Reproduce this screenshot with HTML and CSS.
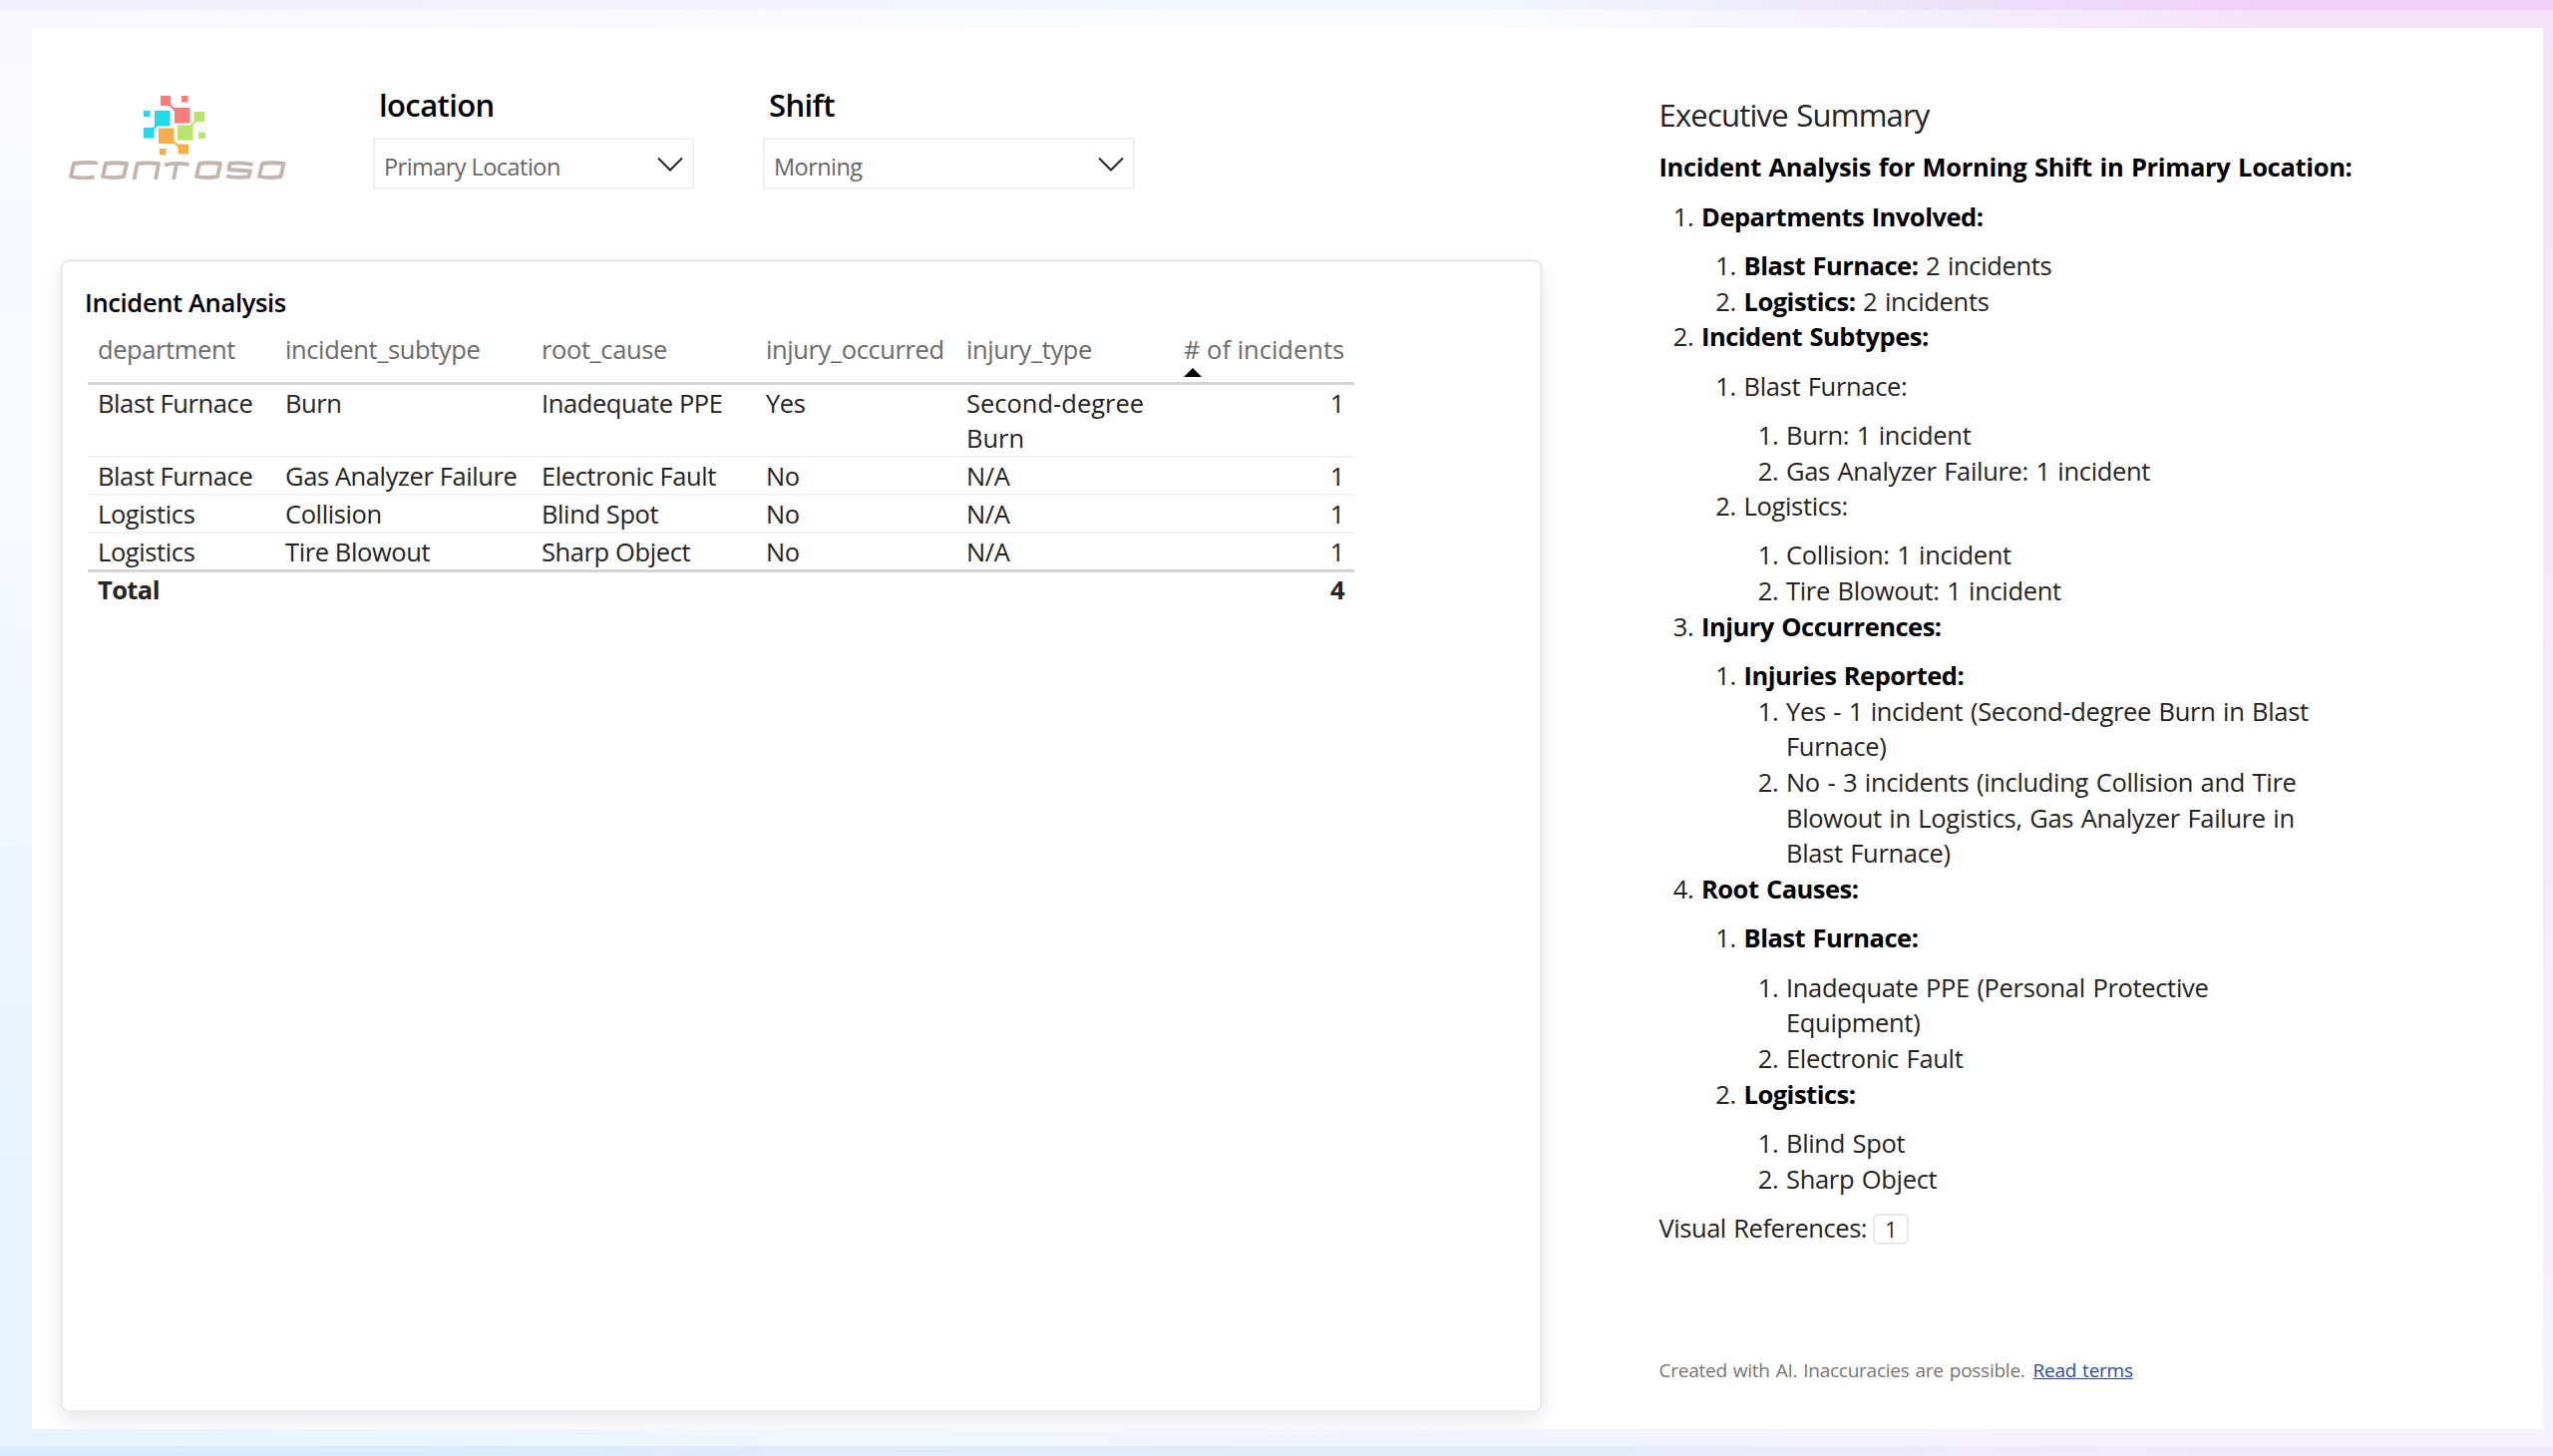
FILE: index.html
```html
<!DOCTYPE html>
<html lang="en">
<head>
<meta charset="utf-8">
<title>Incident Analysis</title>
<link rel="stylesheet" href="styles.css">
</head>
<body>
<div class="backdrop">
<main class="report">
  <section class="left">
    <header class="topbar">
      <svg class="logo" viewBox="0 0 222 90" width="222" height="90" role="img" aria-label="Contoso">
        <g fill="#fa7b78"><path d="M93 2h10v10H93zM114 2h6.500v6.500H114zM107 14h15.500v15.500H107z"/><path d="M101 10l9 9" stroke="#fa7b78" stroke-width="2"/></g>
        <g fill="#20d9ea"><path d="M76 17h6.500v6H76zM87 17h15.500v15.500H87zM76 34h10.500v10.500H76z"/><path d="M84 37l7-7" stroke="#20d9ea" stroke-width="2"/></g>
        <g fill="#b7e66d"><path d="M126.500 18h10.500v10H126.500zM110 31.500h15.500v15H110zM131 38.500h7v6.500h-7z"/><path d="M121 34l9-8" stroke="#b7e66d" stroke-width="2"/></g>
        <g fill="#f9ae48"><path d="M91 34.500h15.500v15.500H91zM92 55h6.500v6.500H92zM110.500 50.500h10.500v10h-10.500z"/><path d="M103 46l10 8" stroke="#f9ae48" stroke-width="2"/></g>
        <g fill="none" stroke="#c2b5ad" stroke-width="3.800" stroke-linejoin="round">
          <path d="M28.500 71Q28.500 69.200 26.500 69.200Q16 68.500 6 70L3 83Q14 85.500 26.500 83.500"/>
          <path d="M38 70Q48 68.500 59 70L56 83.200Q45 85 35 83Z"/>
          <path d="M66.500 86L69.500 70.200Q80 68.500 91 70L88 86"/>
          <path d="M97 71.500Q106 68.500 121.500 71M109 70.500L106 86"/>
          <path d="M132 70Q142 68.500 153 70L150 83.200Q139 85 129 83Z"/>
          <path d="M185.500 71Q173 68.500 162.500 70L161.500 76L183 77.500L181.500 83.200Q169 85 159 82.500"/>
          <path d="M195 70Q205 68.500 216.500 70L213.500 83.200Q202 85 192 83Z"/>
        </g>
      </svg>
      <div class="slicer slicer-location">
        <h2 class="slicer-title">location</h2>
        <div class="select"><span>Primary Location</span>
          <svg class="chevron" viewBox="0 0 26 15" width="26" height="15"><path d="M1 1.500L13 13.500L25 1.500"/></svg></div>
      </div>
      <div class="slicer slicer-shift">
        <h2 class="slicer-title">Shift</h2>
        <div class="select"><span>Morning</span>
          <svg class="chevron" viewBox="0 0 26 15" width="26" height="15"><path d="M1 1.500L13 13.500L25 1.500"/></svg></div>
      </div>
    </header>
    <section class="card">
      <h3 class="card-title">Incident Analysis</h3>
      <table class="incidents">
        <colgroup><col class="c1"><col class="c2"><col class="c3"><col class="c4"><col class="c5"><col class="c6"></colgroup>
        <thead><tr><th>department</th><th>incident_subtype</th><th>root_cause</th><th>injury_occurred</th><th>injury_type</th><th class="num"># of incidents<svg class="sort" viewBox="0 0 18 9" width="18" height="9"><path d="M0 9L9 0L18 9Z"/></svg></th></tr></thead>
        <tbody>
          <tr><td>Blast Furnace</td><td>Burn</td><td>Inadequate PPE</td><td>Yes</td><td class="wide">Second-degree<br>Burn</td><td class="num">1</td></tr>
          <tr><td>Blast Furnace</td><td>Gas Analyzer Failure</td><td>Electronic Fault</td><td>No</td><td>N/A</td><td class="num">1</td></tr>
          <tr><td>Logistics</td><td>Collision</td><td>Blind Spot</td><td>No</td><td>N/A</td><td class="num">1</td></tr>
          <tr><td>Logistics</td><td>Tire Blowout</td><td>Sharp Object</td><td>No</td><td>N/A</td><td class="num">1</td></tr>
        </tbody>
        <tfoot><tr><td>Total</td><td></td><td></td><td></td><td></td><td class="num">4</td></tr></tfoot>
      </table>
    </section>
  </section>
  <aside class="summary">
    <h1 class="summary-title">Executive Summary</h1>
    <p class="lead"><b>Incident Analysis for Morning Shift in Primary Location:</b></p>
    <ol class="outline">
      <li><b>Departments Involved:</b>
        <ol class="spaced"><li><b>Blast Furnace:</b> 2 incidents</li><li><b>Logistics:</b> 2 incidents</li></ol></li>
      <li><b>Incident Subtypes:</b>
        <ol class="spaced">
          <li>Blast Furnace:<ol class="spaced"><li>Burn: 1 incident</li><li>Gas Analyzer Failure: 1 incident</li></ol></li>
          <li>Logistics:<ol class="spaced"><li>Collision: 1 incident</li><li>Tire Blowout: 1 incident</li></ol></li>
        </ol></li>
      <li><b>Injury Occurrences:</b>
        <ol class="spaced"><li><b>Injuries Reported:</b>
          <ol><li>Yes - 1 incident (Second-degree Burn in Blast Furnace)</li><li>No - 3 incidents (including Collision and Tire Blowout in Logistics, Gas Analyzer Failure in Blast Furnace)</li></ol></li></ol></li>
      <li><b>Root Causes:</b>
        <ol class="spaced">
          <li><b>Blast Furnace:</b><ol class="spaced"><li>Inadequate PPE (Personal Protective Equipment)</li><li>Electronic Fault</li></ol></li>
          <li><b>Logistics:</b><ol class="spaced"><li>Blind Spot</li><li>Sharp Object</li></ol></li>
        </ol></li>
    </ol>
    <p class="refs">Visual References: <span class="ref">1</span></p>
    <footer class="terms">Created with AI. Inaccuracies are possible. <a class="link" href="#">Read terms</a></footer>
  </aside>
</main>
</div>
</body>
</html>
```
FILE: styles.css
```css
* { box-sizing: border-box; }
body { margin: 0; font-family: "Open Sans", "Noto Sans", sans-serif; color: #252423; }
h1, h2, h3, p, ol { margin: 0; padding: 0; }
.backdrop {
  width: 2560px; height: 1460px; padding: 28px 10px 27px 32px;
  background:
    linear-gradient(90deg, #f1effd 0%, #f4f3fe 30%, #f2f7ff 46%, #f2f7ff 58%, #ece8fa 72%, #efd0f7 89%, #efd0f7 100%) 0 0 / 100% 10px no-repeat,
    linear-gradient(90deg, #d7edff 0%, #d7edff 16%, #dfebfc 28%, #e4ebfb 60%, #efebfb 78%, #efe9fa 100%) 0 100% / 100% 10px no-repeat,
    linear-gradient(90deg, #f8f7fe 0%, #f9f9fe 30%, #fafcff 46%, #fafcff 58%, #f4f0fd 75%, #f5e2f8 89%, #f5e2f8 100%) 0 10px / 100% 18px no-repeat,
    linear-gradient(90deg, #e7f4ff 0%, #e9f5ff 16%, #f2f6ff 33%, #f1f4fe 60%, #f6f3fe 78%, #f6f3fe 100%) 0 1433px / 100% 17px no-repeat,
    linear-gradient(180deg, #f8f7fe 0%, #f6f9ff 35%, #e7f4ff 80%) 0 0 / 32px 100% no-repeat,
    linear-gradient(180deg, #f5e2f8 0%, #f5eafa 60%, #f6f3fe 100%) 100% 0 / 10px 100% no-repeat;
}
.report { display: flex; height: 1405px; background: #fff; overflow: hidden; }
.left { width: 1514px; margin-left: 29px; flex: none; }
.topbar { display: flex; height: 232px; }
.logo { margin: 66px 0 0 7px; flex: none; }
.slicer { padding-top: 52px; }
.slicer-location { width: 322px; margin-left: 84px; }
.slicer-shift { width: 373px; margin-left: 69px; }
.slicer-title { font-size: 31px; line-height: 50px; height: 58px; padding-left: 6px; font-weight: 600; color: #000; letter-spacing: -0.6px; }
.select { display: flex; align-items: center; justify-content: space-between; height: 52px; padding: 5px 9px 0 9px; border: 2px solid #f0f0f0; font-size: 23.500px; color: #666; letter-spacing: -0.55px; }
.chevron { fill: none; stroke: #252423; stroke-width: 2; margin-top: -5px; }
.card { width: 1487px; height: 1157px; margin-left: -1px; border: 3px solid #ededed; border-radius: 9px; box-shadow: 0 8px 20px rgba(30, 20, 60, .09); padding: 20px 0 0 22px; }
.card-title { font-size: 25.500px; line-height: 40px; font-weight: 600; color: #000; letter-spacing: -0.35px; }
.incidents { margin: 1px 0 0 3px; width: 1270px; table-layout: fixed; border-collapse: collapse; font-size: 25.500px; line-height: 35px; letter-spacing: -0.4px; white-space: nowrap; }
.c1 { width: 188px; } .c2 { width: 257px; } .c3 { width: 225px; } .c4 { width: 201px; } .c5 { width: 218px; } .c6 { width: 181px; }
.incidents th, .incidents td { padding: 1px 10px 0; text-align: left; vertical-align: top; }
.incidents th { position: relative; height: 60px; padding-top: 9px; font-weight: 400; color: #6b6b6b; border-bottom: 3px solid #d4d4d4; }
.incidents td { height: 38px; border-bottom: 2px solid #f2f2f2; }
.incidents tbody tr:last-child td { border-bottom: 3px solid #d4d4d4; }
.incidents tfoot td { border: 0; padding-top: 0; font-weight: 700; letter-spacing: -0.6px; }
.incidents .num { text-align: right; }
.incidents th.num, .incidents .wide { letter-spacing: 0; }
.sort { position: absolute; left: 10px; bottom: 5px; }
.summary { display: flex; flex-direction: column; width: 740px; margin-left: 88.500px; font-size: 25.500px; line-height: 35.650px; letter-spacing: -0.33px; word-spacing: 1.3px; }
.summary-title { margin-top: 65px; font-size: 31px; line-height: 44px; font-weight: 400; letter-spacing: -0.8px; }
.lead { margin-top: 13px; }
b { font-weight: 700; color: #000; }
.outline { width: 671px; margin-top: 14px; }
.outline b { letter-spacing: -0.5px; }
.outline, .outline ol { padding-left: 42.500px; }
.spaced { margin-top: 13.650px; }
.refs { display: flex; align-items: center; gap: 6px; margin-top: 14px; letter-spacing: -0.45px; }
.ref { width: 36px; height: 31px; border: 2px solid #e8e8e8; border-radius: 6px; font-size: 21px; line-height: 28px; text-align: center; }
.terms { margin-top: 109px; font-size: 19px; line-height: 30px; color: #757575; letter-spacing: -0.25px; }
.link { color: #2b4aa3; margin-left: 2px; }
```
